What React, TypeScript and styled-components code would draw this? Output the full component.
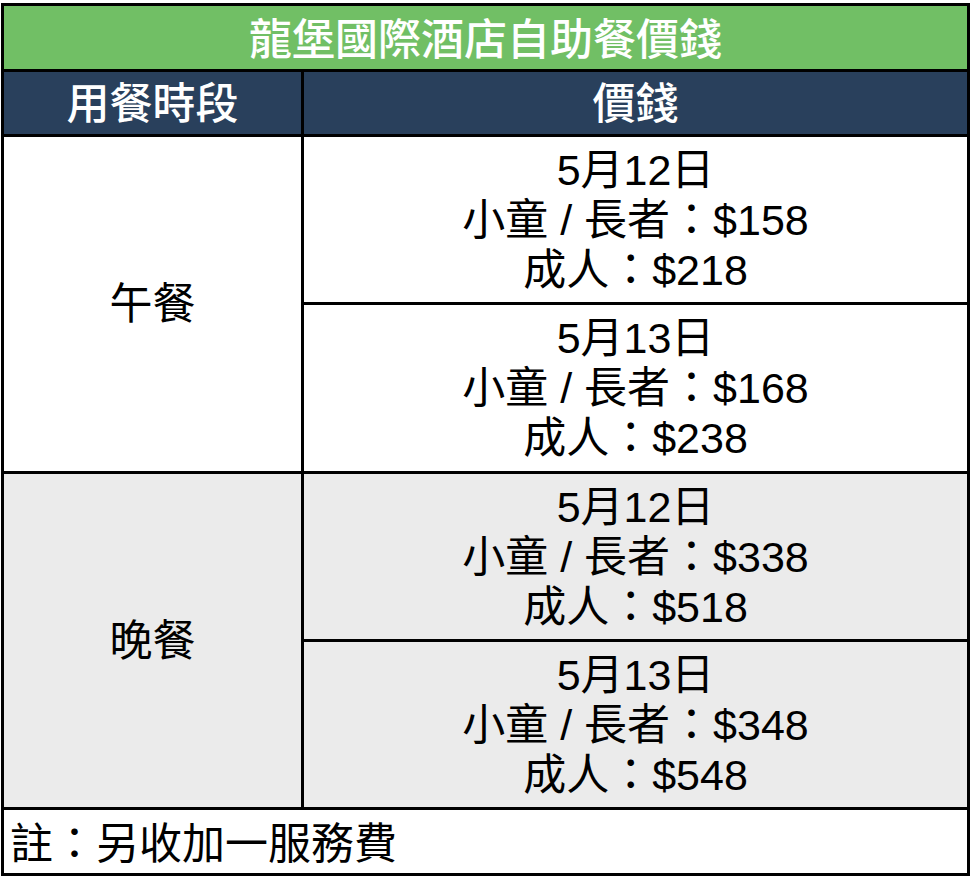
import { Fragment } from "react";
import styled, { createGlobalStyle } from "styled-components";

const GlobalStyle = createGlobalStyle`
  html, body {
    margin: 0;
    padding: 0;
    background: #ffffff;
  }
  body {
    font-family: "Liberation Sans", "Noto Sans CJK TC", sans-serif;
    color: #000;
  }
`;

const Page = styled.div`
  padding: 3px 0 0 1px;
`;

const Table = styled.div`
  display: grid;
  grid-template-columns: 297px 663px;
  grid-template-rows: 63px 62px 165px 166px 165px 165px 63px;
  gap: 3px;
  padding: 3px;
  width: max-content;
  background: #000;
`;

const Cell = styled.div<{ $bg?: string; $span?: number; $rows?: number; $col?: number }>`
  background: ${(p) => p.$bg ?? "#ffffff"};
  grid-column: ${(p) => (p.$col ? p.$col : p.$span ? `span ${p.$span}` : "auto")};
  grid-row: ${(p) => (p.$rows ? `span ${p.$rows}` : "auto")};
  display: flex;
  flex-direction: column;
  align-items: center;
  justify-content: center;
  font-size: 43px;
  line-height: 50px;
  text-align: center;
`;

const Title = styled(Cell)`
  background: #71bf65;
  color: #fff;
  font-weight: 500;
  padding-top: 4px;
`;

const Head = styled(Cell)`
  background: #29405c;
  color: #fff;
  font-weight: 500;
  padding-top: 2px;
`;

const Note = styled(Cell)`
  align-items: flex-start;
  padding: 4px 0 0 6px;
`;

type Price = { date: string; child: string; adult: string };

const meals: { name: string; bg: string; prices: Price[] }[] = [
  {
    name: "午餐",
    bg: "#ffffff",
    prices: [
      { date: "5月12日", child: "$158", adult: "$218" },
      { date: "5月13日", child: "$168", adult: "$238" },
    ],
  },
  {
    name: "晚餐",
    bg: "#ebebeb",
    prices: [
      { date: "5月12日", child: "$338", adult: "$518" },
      { date: "5月13日", child: "$348", adult: "$548" },
    ],
  },
];

export default function App() {
  return (
    <Page>
      <GlobalStyle />
      <Table>
        <Title $span={2}>龍堡國際酒店自助餐價錢</Title>
        <Head>用餐時段</Head>
        <Head>價錢</Head>
        {meals.map((meal) => (
          <Fragment key={meal.name}>
            <Cell $bg={meal.bg} $rows={2}>
              {meal.name}
            </Cell>
            {meal.prices.map((p) => (
              <Cell key={meal.name + p.date} $bg={meal.bg} $col={2}>
                <div>{p.date}</div>
                <div>小童 / 長者：{p.child}</div>
                <div>成人：{p.adult}</div>
              </Cell>
            ))}
          </Fragment>
        ))}
        <Note $span={2}>註：另收加一服務費</Note>
      </Table>
    </Page>
  );
}
